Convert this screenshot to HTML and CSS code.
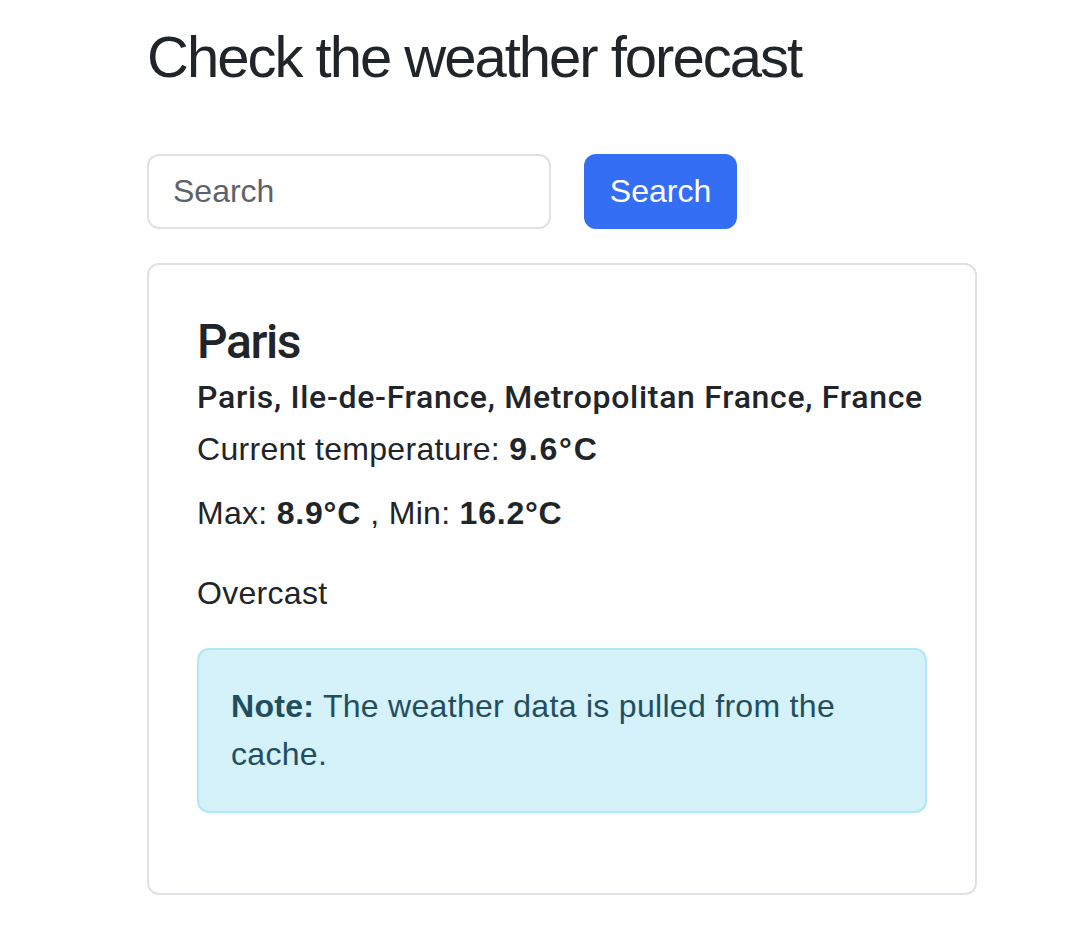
FILE: index.html
```html
<!DOCTYPE html>
<html lang="en">
<head>
<meta charset="utf-8">
<title>Weather forecast</title>
<link rel="stylesheet" href="styles.css">
</head>
<body>
<main class="page">
  <h2 class="title">Check the weather forecast</h2>
  <form class="search">
    <input class="search-input" type="text" placeholder="Search">
    <button class="search-btn" type="button">Search</button>
  </form>
  <section class="card">
    <h4 class="card-title">Paris</h4>
    <h6 class="card-subtitle">Paris, Ile-de-France, Metropolitan France, France</h6>
    <p class="temp">Current temperature: <b>9.6°C</b></p>
    <p class="minmax">Max: <b>8.9°C</b> , Min: <b>16.2°C</b></p>
    <p class="cond">Overcast</p>
    <div class="alert"><b>Note:</b> The weather data is pulled from the cache.</div>
  </section>
</main>
</body>
</html>
```
FILE: styles.css
```css
* { box-sizing: border-box; }
html, body { margin: 0; padding: 0; background: #fff; }
body {
  font-family: "Liberation Sans", Arial, sans-serif;
  font-size: 32px;
  line-height: 1.5;
  color: #212529;
}
.page {
  width: 830px;
  margin-left: 147px;
  padding-top: 22px;
}
.title {
  margin: 0 0 62px 0;
  font-size: 58px;
  font-weight: 400;
  letter-spacing: -2px;
  line-height: 1.2;
}
.search {
  display: flex;
  gap: 33px;
  margin: 0 0 34px 0;
}
.search-input {
  width: 404px;
  height: 75px;
  padding: 0 24px;
  border: 2px solid #dee2e6;
  border-radius: 12px;
  font: inherit;
  color: #212529;
  outline: none;
}
.search-input::placeholder { color: #5d636a; }
.search-btn {
  width: 153px;
  height: 75px;
  border: 0;
  border-radius: 12px;
  background: #346ef5;
  color: #fff;
  font: inherit;
  padding: 0;
}
.card {
  border: 2px solid #dee2e6;
  border-radius: 12px;
  padding: 48px;
  letter-spacing: 0.3px;
}
.card-title {
  margin: 0 0 16px 0;
  font-family: Roboto, "Liberation Sans", sans-serif;
  font-size: 48px;
  font-weight: 500;
  letter-spacing: -1.4px;
  line-height: 1.2;
}
.card-subtitle {
  margin: -8px 0 8px 0;
  font-family: Roboto, "Liberation Sans", sans-serif;
  font-size: 32px;
  font-weight: 500;
  letter-spacing: 0.7px;
  line-height: 1.2;
}
.temp { margin: 0 0 16px 0; }
.minmax { margin: 0 0 32px 0; }
.cond { margin: 0 0 31px 0; }
b { font-weight: 700; }
.temp b, .minmax b { letter-spacing: 1.2px; }
.temp b { letter-spacing: 1.8px; }
.minmax b { letter-spacing: 0.8px; }
.alert {
  padding: 32px 32px 33px 32px;
  margin-bottom: 32px;
  border: 2px solid #b0e7f6;
  border-radius: 12px;
  background: #d5f1f9;
  color: #1f4f5e;
  line-height: 1.5;
}
```
